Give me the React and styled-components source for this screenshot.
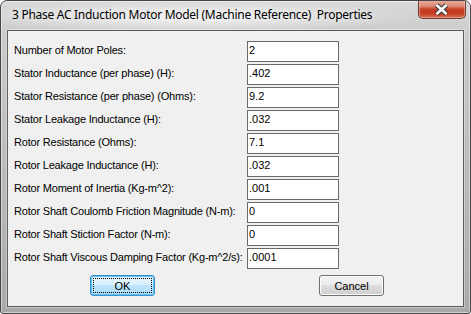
import styled, { createGlobalStyle } from "styled-components";

const GlobalStyle = createGlobalStyle`
  html, body {
    margin: 0;
    padding: 0;
    background: #ffffff;
  }
  body {
    font-family: "Liberation Sans", Arial, sans-serif;
  }
`;

const fields = [
  ["Number of Motor Poles:", "2"],
  ["Stator Inductance (per phase) (H):", ".402"],
  ["Stator Resistance (per phase) (Ohms):", "9.2"],
  ["Stator Leakage Inductance (H):", ".032"],
  ["Rotor Resistance (Ohms):", "7.1"],
  ["Rotor Leakage Inductance (H):", ".032"],
  ["Rotor Moment of Inertia (Kg-m^2):", ".001"],
  ["Rotor Shaft Coulomb Friction Magnitude (N-m):", "0"],
  ["Rotor Shaft Stiction Factor (N-m):", "0"],
  ["Rotor Shaft Viscous Damping Factor (Kg-m^2/s):", ".0001"],
];

export default function App() {
  return (
    <>
      <GlobalStyle />
      <Window>
        <TitleBar>
          <Title>3 Phase AC Induction Motor Model (Machine Reference)&nbsp; Properties</Title>
          <CloseButton>
            <svg width="48" height="19" viewBox="0 0 48 19">
              <path
                d="M19.5 5 L29.5 14 M29.5 5 L19.5 14"
                stroke="#3a3a3a"
                strokeWidth="5"
                fill="none"
              />
              <path
                d="M19.5 5 L29.5 14 M29.5 5 L19.5 14"
                stroke="#ffffff"
                strokeWidth="2.6"
                fill="none"
              />
            </svg>
          </CloseButton>
        </TitleBar>

        <Client>
          <Form>
            {fields.map(([label, value]) => (
              <Row key={label}>
                <Label>{label}</Label>
                <Field readOnly value={value} />
              </Row>
            ))}
          </Form>

          <Footer>
            <Button $primary>OK</Button>
            <Button>Cancel</Button>
          </Footer>
        </Client>
      </Window>
    </>
  );
}

const Window = styled.div`
  width: 471px;
  height: 314px;
  box-sizing: border-box;
  display: flex;
  flex-direction: column;
  border: 1px solid #474747;
  border-radius: 7px 7px 3px 3px;
  background: linear-gradient(180deg, #d9d9d9 0%, #cacaca 12%, #b9b9b9 60%, #a9a9a9 100%);
  box-shadow: inset 0 0 0 1px rgba(255, 255, 255, 0.45);
  overflow: hidden;
`;

const TitleBar = styled.div`
  height: 29px;
  flex: none;
  display: flex;
  align-items: flex-start;
  justify-content: space-between;
  padding: 0 4px 0 11px;
  background: radial-gradient(ellipse 220px 16px at 190px 16px, rgba(255, 255, 255, 0.75), rgba(255, 255, 255, 0) 100%);
`;

const Title = styled.span`
  margin-top: 6px;
  font-family: "Noto Sans", "Open Sans", sans-serif;
  font-size: 12px;
  line-height: 16px;
  letter-spacing: -0.28px;
  color: #000000;
  white-space: nowrap;
  text-shadow: 0 0 6px rgba(255, 255, 255, 0.9);
`;

const CloseButton = styled.div`
  width: 48px;
  height: 19px;
  margin-top: -1px;
  box-sizing: border-box;
  border: 1px solid #6b3a30;
  border-top: none;
  border-radius: 0 0 5px 5px;
  background: linear-gradient(
    180deg,
    #eab2a4 0%,
    #dd8472 35%,
    #c9442a 50%,
    #c23a20 70%,
    #d46a4d 100%
  );
  box-shadow: inset 0 0 0 1px rgba(255, 220, 210, 0.45);
  display: flex;
  align-items: center;
  justify-content: center;

  svg {
    display: block;
    margin-left: -2px;
  }
`;

const Client = styled.div`
  flex: 1;
  margin: 0 6px 6px;
  border: 1px solid #5c5c5c;
  background: #f0f0f0;
  padding: 10px 0 0 6px;
  box-shadow: 0 0 0 1px rgba(255, 255, 255, 0.35);
`;

const Form = styled.div`
  display: flex;
  flex-direction: column;
  gap: 2px;
`;

const Row = styled.div`
  display: grid;
  grid-template-columns: 233px 92px;
  align-items: baseline;
  height: 21px;
`;

const Label = styled.span`
  font-size: 11px;
  color: #000000;
  white-space: nowrap;
  letter-spacing: -0.2px;
`;

const Field = styled.input`
  width: 92px;
  height: 21px;
  box-sizing: border-box;
  margin: 0;
  border: 1px solid #6a6a6a;
  border-radius: 0;
  padding: 0 1px 3px;
  background: #ffffff;
  font-family: "Liberation Sans", Arial, sans-serif;
  font-size: 11px;
  color: #000000;
  outline: none;
`;

const Footer = styled.div`
  display: flex;
  gap: 164px;
  padding: 6px 0 0 76px;
`;

const Button = styled.div`
  position: relative;
  width: 65px;
  height: 21px;
  box-sizing: border-box;
  border: 1px solid ${(p) => (p.$primary ? "#3c8fc9" : "#707070")};
  border-radius: 3px;
  display: flex;
  align-items: center;
  justify-content: center;
  font-size: 11px;
  color: #000000;
  background: ${(p) =>
    p.$primary
      ? "linear-gradient(180deg, #eaf6fd 0%, #d9f0fc 50%, #bee6fd 50%, #a7d9f5 100%)"
      : "linear-gradient(180deg, #f2f2f2 0%, #ebebeb 50%, #dddddd 50%, #cfcfcf 100%)"};
  box-shadow: ${(p) =>
    p.$primary ? "inset 0 0 0 1px #5cc4f0" : "inset 0 0 0 1px #fcfcfc"};

  &::after {
    content: "";
    display: ${(p) => (p.$primary ? "block" : "none")};
    position: absolute;
    inset: 2px;
    border: 1px dotted #000000;
  }
`;
